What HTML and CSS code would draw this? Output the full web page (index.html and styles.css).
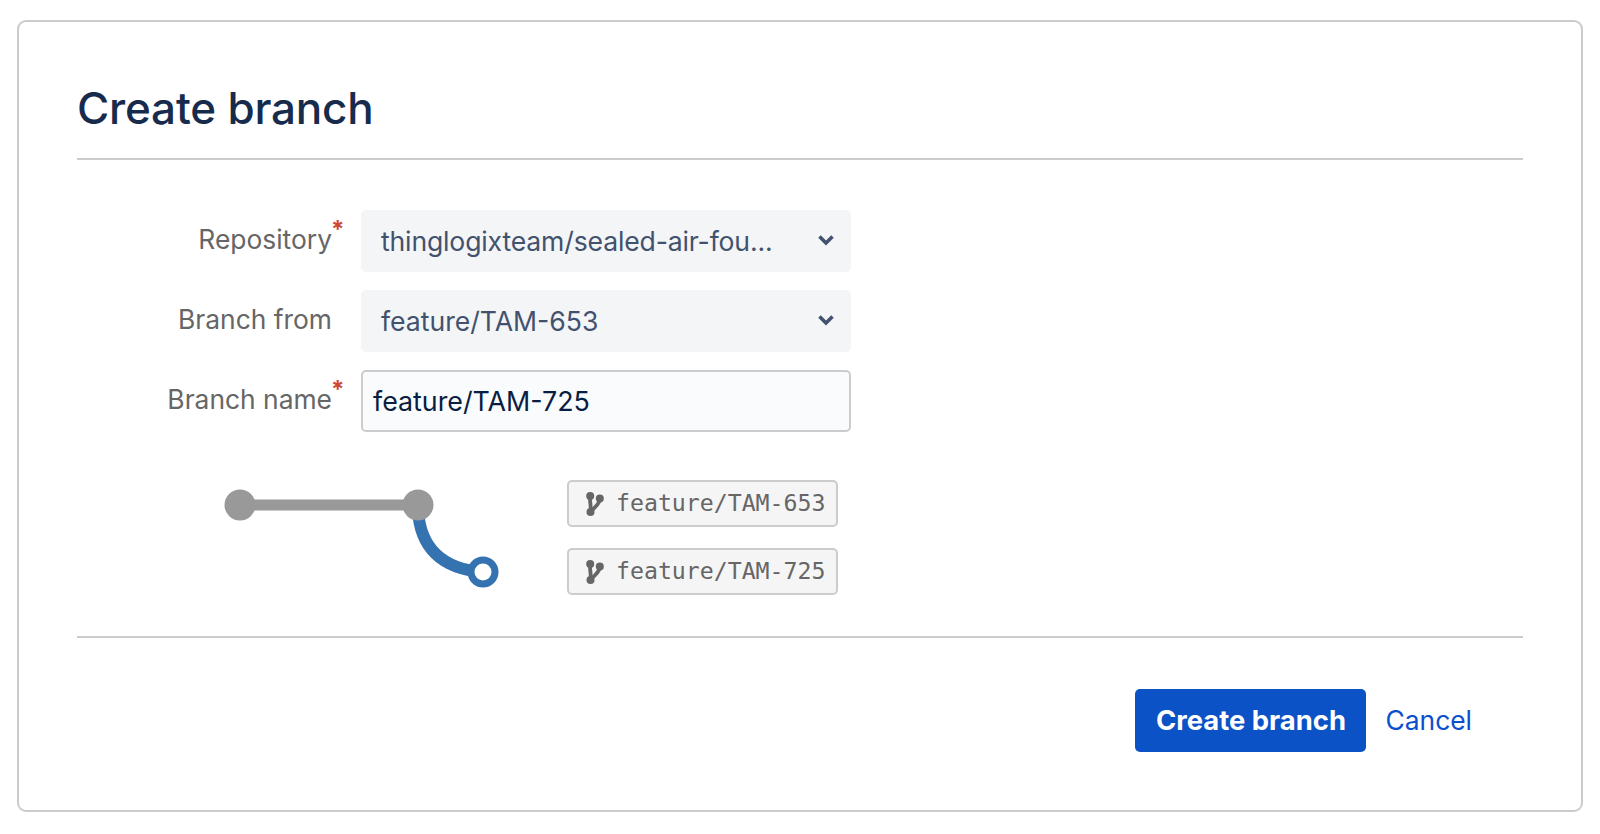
FILE: index.html
```html
<!DOCTYPE html>
<html lang="en">
<head>
<meta charset="utf-8">
<title>Create branch</title>
<link rel="stylesheet" href="styles.css">
</head>
<body>
<main class="card">
  <h1 class="title">Create branch</h1>
  <form class="form">
    <div class="row">
      <label class="label">Repository<span class="req">*</span></label>
      <div class="select"><span class="select-text select-long">thinglogixteam/sealed-air-fou...</span>
        <svg class="chev" viewBox="0 0 18 12"><path d="M2.500 2.500L9 9l6.500-6.500" fill="none" stroke="#42526e" stroke-width="3.600"/></svg></div>
    </div>
    <div class="row">
      <label class="label">Branch from</label>
      <div class="select"><span class="select-text">feature/TAM-653</span>
        <svg class="chev" viewBox="0 0 18 12"><path d="M2.500 2.500L9 9l6.500-6.500" fill="none" stroke="#42526e" stroke-width="3.600"/></svg></div>
    </div>
    <div class="row">
      <label class="label">Branch name<span class="req">*</span></label>
      <div class="input">feature/TAM-725</div>
    </div>
  </form>
  <section class="preview">
    <svg class="graph" viewBox="0 0 280 110">
      <path d="M194 26C196 62 216 85 259 88" fill="none" stroke="#3572b0" stroke-width="12"/>
      <path d="M16 21H194" fill="none" stroke="#999" stroke-width="11"/>
      <circle cx="16" cy="21" r="15.500" fill="#999"/>
      <circle cx="194" cy="21" r="15.500" fill="#999"/>
      <circle cx="259" cy="88" r="12" fill="#fff" stroke="#3572b0" stroke-width="7"/>
    </svg>
    <div class="tags">
      <div class="tag"><svg class="branch" viewBox="0 0 18 24"><g fill="none" stroke="#666" stroke-width="3.800"><path d="M4 4C3.500 9 5.500 15 4.500 20"/><path d="M13.800 7C14 12 8 15 5 20"/></g><g fill="#666"><circle cx="4.200" cy="4" r="4"/><circle cx="13.800" cy="6.500" r="4"/><circle cx="4.500" cy="20" r="4"/></g></svg><span class="tag-text">feature/TAM-653</span></div>
      <div class="tag"><svg class="branch" viewBox="0 0 18 24"><g fill="none" stroke="#666" stroke-width="3.800"><path d="M4 4C3.500 9 5.500 15 4.500 20"/><path d="M13.800 7C14 12 8 15 5 20"/></g><g fill="#666"><circle cx="4.200" cy="4" r="4"/><circle cx="13.800" cy="6.500" r="4"/><circle cx="4.500" cy="20" r="4"/></g></svg><span class="tag-text">feature/TAM-725</span></div>
    </div>
  </section>
  <footer class="actions">
    <button class="primary" type="button">Create branch</button>
    <a class="cancel" href="#">Cancel</a>
  </footer>
</main>
</body>
</html>
```
FILE: styles.css
```css
* { box-sizing: border-box; }
html, body { margin: 0; height: 100%; background: #fff; }
body { padding: 20px 16px 0 17px; font-family: Inter, "Liberation Sans", sans-serif; overflow: hidden; }
.card {
  width: 1566px; height: 792px; border: 2px solid #ccc; border-radius: 9px; background: #fff;
  padding: 0 58px 0 58px;
}
.title {
  margin: 0; height: 138px; padding-top: 60px; font-size: 44px; line-height: 52px; font-weight: 500;
  color: #172b4d; letter-spacing: -0.2px; border-bottom: 2px solid #ccc;
}
.form { padding-top: 50px; display: flex; flex-direction: column; gap: 18px; }
.row { display: grid; grid-template-columns: 255px 490px; column-gap: 29px; }
.label { position: relative; justify-self: end; align-self: center; margin-top: -5px; font-size: 26.4px; color: #666; }
.req { position: absolute; left: calc(100% - 1px); top: -8px; color: #d04437; font-size: 24px; font-weight: 700; }
.select {
  height: 62px; background: #f4f5f7; border-radius: 5px; padding: 0 16px 0 20px;
  display: flex; align-items: center; justify-content: space-between; color: #42526e; font-size: 26.6px;
}
.select-long { letter-spacing: -0.16px; }
.chev { width: 18px; height: 12px; margin-top: -2px; }
.input {
  height: 62px; border: 2px solid #ccc; border-radius: 5px; background: #fafbfc; padding: 0 10px;
  display: flex; align-items: center; color: #091e42; font-size: 26.8px;
}
.preview { display: flex; padding-top: 50px; padding-left: 147px; height: 206px; border-bottom: 2px solid #ccc; }
.graph { width: 280px; height: 110px; margin-top: 2px; flex: none; }
.tags { margin-left: 63px; display: flex; flex-direction: column; gap: 21px; margin-top: -2px; }
.tag {
  width: 271px; height: 47px; border: 2px solid #ccc; border-radius: 5px; background: #f5f5f5;
  display: flex; align-items: center; padding-left: 17px; gap: 12px;
  font-family: "DejaVu Sans Mono", monospace; font-size: 23.2px; color: #666;
}
.tag-text { margin-top: -2px; }
.branch { width: 18px; height: 24px; flex: none; }
.actions { display: flex; align-items: center; justify-content: flex-end; padding: 51px 51px 0 0; gap: 19px; }
.primary {
  width: 231px; height: 63px; border: 0; border-radius: 5px; background: #0b52c7; color: #fff;
  font-family: inherit; font-size: 27.4px; font-weight: 700; padding: 0 0 2px;
}
.cancel { color: #0b4fd0; font-size: 26.4px; text-decoration: none; margin-top: -2px; }
```
